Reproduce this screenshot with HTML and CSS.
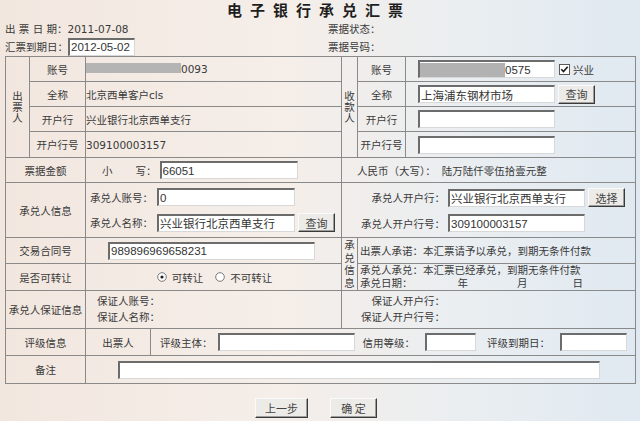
FILE: index.html
```html
<!DOCTYPE html>
<html lang="zh-CN">
<head>
  <meta charset="UTF-8" />
  <title>电子银行承兑汇票</title>
  <link rel="stylesheet" href="styles.css">
</head>
<body>
  <div class="title">电子银行承兑汇票</div>
  <div class="info">
    <div class="info-left">出 票 日 期：2011-07-08</div>
    <div class="info-right">票据状态：</div>
  </div>
  <div class="info info2">
    <div class="info-left">汇票到期日：<input class="txt w67" value="2012-05-02"></div>
    <div class="info-right">票据号码：</div>
  </div>

  <table class="bill">
    <colgroup>
      <col class="c1"><col class="c2"><col class="c3"><col class="c4"><col class="c5"><col class="c6"><col class="c7">
    </colgroup>
    <tr class="h25">
      <td rowspan="4" class="vert">出<br>票<br>人</td>
      <td class="lbl">账号</td>
      <td colspan="2" class="val"><span class="mask"></span>0093</td>
      <td rowspan="4" class="vert">收<br>款<br>人</td>
      <td class="lbl">账号</td>
      <td class="pad13">
        <div class="line">
          <div class="txt field w137"><span class="mask2"></span>0575</div>
          <svg class="chk" width="11" height="11" viewBox="0 0 11 11"><rect x="0.5" y="0.5" width="10" height="10" fill="#fff" stroke="#5a5a5a"/><path d="M2.3 5.2 L4.5 7.6 L8.7 2.8" fill="none" stroke="#1e1e1e" stroke-width="1.7"/></svg>
          <span>兴业</span>
        </div>
      </td>
    </tr>
    <tr class="h25">
      <td class="lbl">全称</td>
      <td colspan="2" class="val">北京西单客户cls</td>
      <td class="lbl">全称</td>
      <td class="pad13">
        <div class="line">
          <input class="txt w137" value="上海浦东钢材市场">
          <button class="btn bq">查询</button>
        </div>
      </td>
    </tr>
    <tr class="h25">
      <td class="lbl">开户行</td>
      <td colspan="2" class="val">兴业银行北京西单支行</td>
      <td class="lbl">开户行</td>
      <td class="pad13"><div class="line"><input class="txt w137" value=""></div></td>
    </tr>
    <tr class="h26">
      <td class="lbl">开户行号</td>
      <td colspan="2" class="val">309100003157</td>
      <td class="lbl">开户行号</td>
      <td class="pad13"><div class="line"><input class="txt w137" value=""></div></td>
    </tr>

    <tr class="h25">
      <td colspan="2" class="lbl">票据金额</td>
      <td colspan="2" class="amount">
        <div class="line"><span class="small">小</span>写：<input class="txt w138 ml3" value="66051"></div>
      </td>
      <td colspan="3" class="rmb">
        <div class="line">人民币（大写）：<span class="daxie">陆万陆仟零伍拾壹元整</span></div>
      </td>
    </tr>

    <tr class="h55">
      <td colspan="2" class="lbl">承兑人信息</td>
      <td colspan="2" class="pad5">
        <div class="stack">
          <div class="line">承兑人账号：<input class="txt w138 ml4" value="0"></div>
          <div class="line">承兑人名称：<input class="txt w138 ml4" value="兴业银行北京西单支行"><button class="btn bq">查询</button></div>
        </div>
      </td>
      <td colspan="3" class="pad14">
        <div class="stack">
          <div class="line"><span class="rlbl">承兑人开户行：</span><input class="txt w137" value="兴业银行北京西单支行"><button class="btn bx">选择</button></div>
          <div class="line"><span class="rlbl">承兑人开户行号：</span><input class="txt w137" value="309100003157"></div>
        </div>
      </td>
    </tr>

    <tr class="h26">
      <td colspan="2" class="lbl">交易合同号</td>
      <td colspan="2" class="pad23"><div class="line"><input class="txt w207" value="989896969658231"></div></td>
      <td rowspan="2" class="vert tall">承<br>兑<br>信<br>息</td>
      <td colspan="2" class="pad2">出票人承诺：本汇票请予以承兑，到期无条件付款</td>
    </tr>
    <tr class="h27">
      <td colspan="2" class="lbl">是否可转让</td>
      <td colspan="2">
        <div class="line center">
          <svg class="rad" width="10" height="10" viewBox="0 0 10 10"><circle cx="5" cy="5" r="4.3" fill="#fff" stroke="#7a7a7a"/><circle cx="5" cy="5" r="1.6" fill="#222"/></svg>
          <span class="opt">可转让</span>
          <svg class="rad" width="10" height="10" viewBox="0 0 10 10"><circle cx="5" cy="5" r="4.3" fill="#fff" stroke="#7a7a7a"/></svg>
          <span>不可转让</span>
        </div>
      </td>
      <td colspan="2" class="pad2 two">
        <div>承兑人承兑：本汇票已经承兑，到期无条件付款</div>
        <div>承兑日期：<span class="y">年</span><span class="m">月</span><span class="d">日</span></div>
      </td>
    </tr>

    <tr class="h38">
      <td colspan="2" class="lbl">承兑人保证信息</td>
      <td colspan="2" class="pad12 two2">
        <div>保证人账号：</div>
        <div>保证人名称：</div>
      </td>
      <td colspan="3" class="pad14 two2">
        <div><span class="rlbl">保证人开户行：</span></div>
        <div><span class="rlbl">保证人开户行号：</span></div>
      </td>
    </tr>

    <tr class="h27">
      <td colspan="2" class="lbl">评级信息</td>
      <td class="lbl">出票人</td>
      <td colspan="4" class="pad10">
        <div class="line">
          评级主体：<input class="txt w137 ml5" value="">
          <span class="ml8">信用等级：</span><input class="txt w51 ml10" value="">
          <span class="ml11">评级到期日：</span><input class="txt w67 ml10" value="">
        </div>
      </td>
    </tr>

    <tr class="h28">
      <td colspan="2" class="lbl">备注</td>
      <td colspan="5" class="pad33"><div class="line"><input class="txt w482" value=""></div></td>
    </tr>
  </table>

  <div class="actions">
    <button class="btn bprev">上一步</button>
    <button class="btn bok">确 定</button>
  </div>
</body>
</html>
```

FILE: styles.css
```css
html {
  height: 100%;
  background: linear-gradient(to right, #f2e7df 0%, #f5eee9 45%, #eaeef1 72%, #e0e9f1 100%);
}
body {
  margin: 0;
  padding: 0 5px;
  font-family: "DejaVu Sans", "Noto Sans CJK SC", sans-serif;
  font-size: 10.5px;
  color: #3a3a3a;
}
.title {
  height: 20px;
  line-height: 19px;
  text-align: center;
  font-family: "Noto Sans CJK SC", sans-serif;
  font-weight: bold;
  font-size: 15px;
  letter-spacing: 8px;
  color: #1e1e1e;
  padding-right: 2px;
}
.info {
  display: flex;
  align-items: center;
  height: 17px;
}
.info2 {
  height: 19px;
}
.info-left {
  width: 323px;
  display: flex;
  align-items: center;
}

.bill {
  width: 630px;
  border-collapse: collapse;
  table-layout: fixed;
}
.bill td {
  border: 1px solid #8a8a8a;
  padding: 0;
}
.c1 { width: 24px; }
.c2 { width: 56px; }
.c3 { width: 65px; }
.c4 { width: 191px; }
.c5 { width: 16px; }
.c6 { width: 48px; }
.c7 { width: 230px; }

.h25 td { height: 24px; }
.h26 td { height: 25px; }
.h27 td { height: 26px; }
.h28 td { height: 27px; }
.h38 td { height: 37px; }
.h55 td { height: 54px; }

.lbl { text-align: center; }
.vert {
  text-align: center;
  line-height: 11px;
}
.vert.tall { line-height: 12.5px; }
.val { padding-left: 3px; }
.pad2 { padding-left: 2px; }
.bill td.pad5 { padding-left: 4px; }
.bill td.pad10 { padding-left: 9px; }
.bill td.pad12 { padding-left: 11px; }
.bill td.pad13 { padding-left: 12px; }
.bill td.pad14 { padding-left: 0; }
.bill td.pad23 { padding-left: 22px; }
.bill td.pad33 { padding-left: 32px; }
.bill td.pad2 { padding-left: 2px; }
.bill td.amount { padding-left: 16px; }
.bill td.rmb { padding-left: 15px; }

.line {
  display: flex;
  align-items: center;
}
.line.center { justify-content: center; padding-left: 2px; }
.stack {
  display: flex;
  flex-direction: column;
  gap: 7px;
}
.two { line-height: 13px; }
.two2 { line-height: 15.5px; }

.rlbl {
  display: inline-block;
  width: 103px;
  text-align: right;
  margin-right: 3px;
}

.txt {
  box-sizing: border-box;
  height: 18px;
  margin: 0;
  padding: 0 1px;
  border-style: solid;
  border-width: 2px 1px 1px 2px;
  border-color: #6c6c6c #d8d8d8 #d8d8d8 #6c6c6c;
  background: #fff;
  font: 11.5px "Liberation Sans", "Noto Sans CJK SC", sans-serif;
  color: #333;
}
.field {
  display: flex;
  align-items: center;
  padding: 0;
}
.w51 { width: 51px; }
.w67 { width: 67px; }
.w137 { width: 137px; }
.w138 { width: 138px; }
.w207 { width: 207px; }
.w482 { width: 482px; }
.ml3 { margin-left: 3px; }
.ml4 { margin-left: 4px; }
.ml5 { margin-left: 5px; }
.ml8 { margin-left: 8px; }
.ml10 { margin-left: 10px; }
.ml11 { margin-left: 11px; }

.mask {
  display: inline-block;
  width: 95px;
  height: 10px;
  background: #b4b4b4;
}
.mask2 {
  display: inline-block;
  width: 85px;
  height: 14px;
  background: #b2b2b2;
}
.chk { margin: 0 3px 0 4px; }
.rad { margin-right: 5px; }
.opt { margin-right: 12px; }

.small { margin-right: 23px; }
.daxie { margin-left: 6px; }

.y { margin-left: 45px; }
.m { margin-left: 49px; }
.d { margin-left: 45px; }

.btn {
  box-sizing: border-box;
  height: 19px;
  padding: 0;
  margin: 0 0 0 3px;
  font: 11px "Noto Sans CJK SC", sans-serif;
  color: #444;
  background: #ecebe8;
  border: 1px solid;
  border-color: #fafafa #3a3a3a #3a3a3a #fafafa;
  box-shadow: inset -1px -1px 0 #9c9c9c;
}
.bq { width: 37px; }
.bx { width: 37px; }

.actions {
  display: flex;
  justify-content: center;
  gap: 22px;
  margin-top: 14px;
  padding-right: 8px;
}
.actions .btn {
  height: 20px;
  margin: 0;
}
.bprev { width: 53px; }
.bok { width: 47px; }
```
